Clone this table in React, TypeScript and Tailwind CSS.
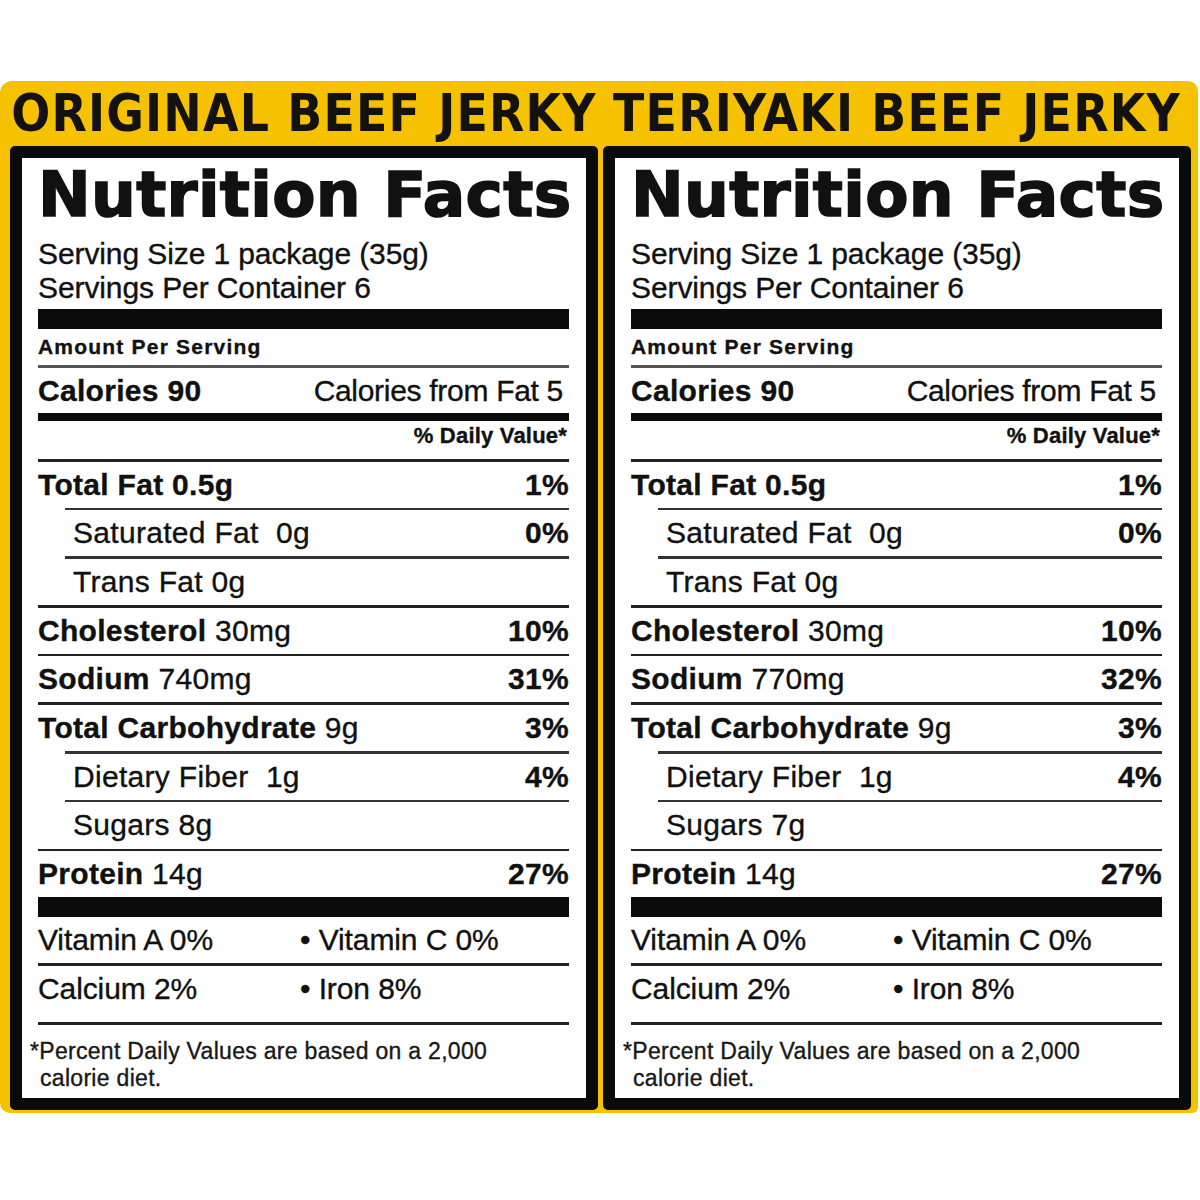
import React from 'react';

type Row = {
  b: string;
  r?: string;
  pct?: string;
  indent?: boolean;
  after: 'indent' | 'full' | 'none';
};

function makeRows(sodium: string, sodiumPct: string, sugars: string): Row[] {
  return [
    { b: 'Total Fat 0.5g', pct: '1%', after: 'indent' },
    { b: '', r: 'Saturated Fat  0g', pct: '0%', indent: true, after: 'indent' },
    { b: '', r: 'Trans Fat 0g', indent: true, after: 'full' },
    { b: 'Cholesterol', r: ' 30mg', pct: '10%', after: 'full' },
    { b: 'Sodium', r: ` ${sodium}`, pct: sodiumPct, after: 'full' },
    { b: 'Total Carbohydrate', r: ' 9g', pct: '3%', after: 'indent' },
    { b: '', r: 'Dietary Fiber  1g', pct: '4%', indent: true, after: 'indent' },
    { b: '', r: `Sugars ${sugars}`, indent: true, after: 'full' },
    { b: 'Protein', r: ' 14g', pct: '27%', after: 'none' },
  ];
}

function Panel({
  name,
  sodium,
  sodiumPct,
  sugars,
}: {
  name: string;
  sodium: string;
  sodiumPct: string;
  sugars: string;
}) {
  const rows = makeRows(sodium, sodiumPct, sugars);
  return (
    <div className="flex flex-col">
      <div className="h-[65px] flex items-center justify-center font-['DejaVu_Sans_Condensed','DejaVu_Sans',sans-serif] [font-stretch:condensed] font-bold text-[51px] leading-none tracking-[1.2px] text-[#141210] whitespace-nowrap">
        {name}
      </div>
      <div className="h-[964px] border-[12px] border-[#0b0b0b] rounded-[5px] bg-white pl-[16px] pr-[17px] pt-[5px] flex flex-col text-[#111] font-['Liberation_Sans',Arial,sans-serif] [-webkit-text-stroke:0.35px_#111]">
        <div className="text-[63px] leading-[64px] font-bold font-['DejaVu_Sans',sans-serif] tracking-[0.3px] [-webkit-text-stroke:1.6px_#111] whitespace-nowrap">
          Nutrition Facts
        </div>
        <div className="mt-[10px] text-[30px] leading-[34px] tracking-[-0.1px] whitespace-nowrap">
          Serving Size 1 package (35g)
        </div>
        <div className="text-[30px] leading-[34px] tracking-[-0.1px] whitespace-nowrap">
          Servings Per Container 6
        </div>
        <div className="mt-[3.5px] h-[20px] bg-[#0b0b0b]" />
        <div className="mt-[6px] text-[21px] leading-[24px] font-bold tracking-[1.2px] whitespace-nowrap">
          Amount Per Serving
        </div>
        <div className="mt-[6px] h-[3px] bg-[#555]" />
        <div className="mt-[6px] h-[34px] flex items-center justify-between text-[30px] leading-[34px] whitespace-nowrap">
          <span className="font-bold tracking-[0.3px]">Calories 90</span>
          <span className="pr-[6px] tracking-[-0.3px]">Calories from Fat 5</span>
        </div>
        <div className="mt-[5px] h-[8px] bg-[#0b0b0b]" />
        <div className="mt-[4px] text-right pr-[2px] text-[22px] leading-[22px] font-bold tracking-[0.2px] whitespace-nowrap">
          % Daily Value*
        </div>
        <div className="mt-[12px] h-[3px] bg-[#222]" />
        {rows.map((row, i) => (
          <React.Fragment key={i}>
            <div className="h-[46.2px] flex items-center justify-between text-[30px] leading-[34px] whitespace-pre tracking-[0.3px]">
              <span className={row.indent ? 'pl-[35px]' : ''}>
                {row.b && <span className="font-bold">{row.b}</span>}
                {row.r && <span>{row.r}</span>}
              </span>
              {row.pct && <span className="font-bold">{row.pct}</span>}
            </div>
            {row.after === 'indent' && <div className="ml-[27px] h-[2.5px] bg-[#333]" />}
            {row.after === 'full' && <div className="h-[2.5px] bg-[#222]" />}
          </React.Fragment>
        ))}
        <div className="h-[20px] bg-[#0b0b0b]" />
        <div className="h-[46px] flex items-center text-[30px] leading-[34px] whitespace-pre tracking-[-0.1px]">
          <span className="w-[262px]">Vitamin A 0%</span>
          <span>• Vitamin C 0%</span>
        </div>
        <div className="h-[3px] bg-[#222]" />
        <div className="h-[56px] pb-[10px] flex items-center text-[30px] leading-[34px] whitespace-pre tracking-[-0.1px]">
          <span className="w-[262px]">Calcium 2%</span>
          <span>• Iron 8%</span>
        </div>
        <div className="h-[3px] bg-[#222]" />
        <div className="mt-[13px] pl-[2px] -indent-[10px] text-[23px] leading-[27px] tracking-[0.3px] text-[#1a1a1a] w-[475px]">
          *Percent Daily Values are based on a 2,000 calorie diet.
        </div>
      </div>
    </div>
  );
}

export default function App() {
  return (
    <div className="w-[1200px] h-[1200px] bg-white pt-[81px]">
      <div className="w-[1198px] bg-[#f6c200] rounded-tl-[12px] rounded-tr-[10px] rounded-bl-[10px] rounded-br-[6px] pl-[10px] pr-[7px] pb-[3px] grid grid-cols-2 gap-x-[5px]">
        <Panel name="ORIGINAL BEEF JERKY" sodium="740mg" sodiumPct="31%" sugars="8g" />
        <Panel name="TERIYAKI BEEF JERKY" sodium="770mg" sodiumPct="32%" sugars="7g" />
      </div>
    </div>
  );
}
